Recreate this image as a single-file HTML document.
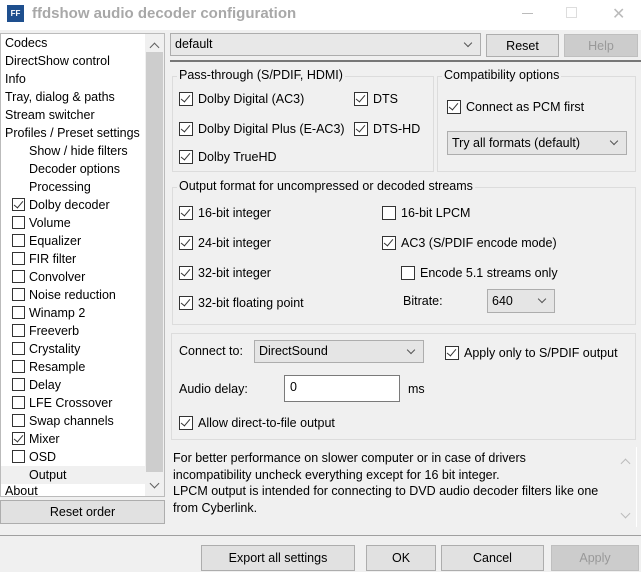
<html><head><style>
*{box-sizing:border-box}
body{margin:0;width:641px;height:572px;background:#f0f0f0;font-family:"Liberation Sans",sans-serif;font-size:12.5px;color:#000;position:relative;overflow:hidden}
.a{position:absolute;white-space:nowrap}
.cb{position:absolute;width:14px;height:14px;border:1px solid #333;background:#fff}
.cb.c::after{content:"";position:absolute;left:3px;top:0px;width:4px;height:8px;border:solid #333;border-width:0 1.3px 1.3px 0;transform:rotate(40deg)}
.btn{position:absolute;border:1px solid #adadad;background:#e1e1e1;text-align:center;line-height:22px}
.grp{position:absolute;border:1px solid #dcdcdc}
.lab{position:absolute;background:#f0f0f0;padding:0 2px;top:-9px;left:4px}
.combo{position:absolute;border:1px solid #adadad;background:#e5e5e5;padding-left:4px;line-height:20px}
.combo::after{content:"";position:absolute;right:9px;top:6px;width:5px;height:5px;border:solid #555;border-width:0 1px 1px 0;transform:rotate(45deg)}
.t{position:absolute;left:0;width:145px;height:18px;line-height:18px}
.chev{position:absolute;width:7px;height:7px;border:solid #606060;border-width:1.3px 0 0 1.3px}
</style></head><body>
<div class="a" style="left:0;top:0;width:641px;height:30px;background:#fff"></div>
<div class="a" style="left:7px;top:5px;width:17px;height:17px;background:#1e4f8e;color:#fff;font-size:8px;font-weight:bold;line-height:17px;text-align:center">FF</div>
<div class="a" style="left:32px;top:5px;font-size:15px;font-weight:bold;color:#a8a8a8">ffdshow audio decoder configuration</div>
<div class="a" style="left:522px;top:13px;width:11px;height:1px;background:#bbb"></div>
<div class="a" style="left:566px;top:7px;width:11px;height:11px;border:1px solid #ddd"></div>
<div class="a" style="left:612px;top:4px;font-size:16px;color:#bbb">✕</div>

<div class="a" style="left:0;top:33px;width:165px;height:464px;background:#fff;border:1px solid #bbb;overflow:hidden">
<div class="a" style="left:144px;top:0;width:19px;height:464px;background:#f0f0f0"></div>
<div class="a" style="left:145px;top:18px;width:17px;height:420px;background:#cdcdcd"></div>
<div class="chev" style="left:150px;top:10px;transform:rotate(45deg)"></div>
<div class="chev" style="left:150px;top:446px;transform:rotate(225deg)"></div>
<div class="t" style="top:432px;background:#f0f0f0"></div>
</div>
<div class="a" style="left:5px;top:34px;line-height:18px">Codecs<br>DirectShow control<br>Info<br>Tray, dialog &amp; paths<br>Stream switcher<br>Profiles / Preset settings</div>
<div class="a" style="left:29px;top:142px;line-height:18px">Show / hide filters<br>Decoder options<br>Processing</div>
<div class="a" style="left:29px;top:196px;line-height:18px">Dolby decoder<br>Volume<br>Equalizer<br>FIR filter<br>Convolver<br>Noise reduction<br>Winamp 2<br>Freeverb<br>Crystality<br>Resample<br>Delay<br>LFE Crossover<br>Swap channels<br>Mixer<br>OSD<br>Output</div>
<div class="a" style="left:5px;top:484px;line-height:14px;height:12px;overflow:hidden">About</div>
<div class="btn" style="left:0;top:500px;width:165px;height:24px">Reset order</div>

<div class="combo" style="left:170px;top:33px;width:311px;height:23px;background:#e8e8e8">default</div>
<div class="btn" style="left:486px;top:34px;width:73px;height:23px">Reset</div>
<div class="btn" style="left:564px;top:34px;width:74px;height:23px;color:#999;background:#ccc;border-color:#bfbfbf">Help</div>
<div class="a" style="left:170px;top:60px;width:471px;height:2px;background:#777"></div>

<div class="grp" style="left:172px;top:76px;width:262px;height:96px"><span class="lab" style="top:-9px">Pass-through (S/PDIF, HDMI)</span></div>
<div class="grp" style="left:437px;top:76px;width:199px;height:96px"><span class="lab">Compatibility options</span></div>
<div class="grp" style="left:172px;top:187px;width:464px;height:138px"><span class="lab">Output format for uncompressed or decoded streams</span></div>
<div class="grp" style="left:171px;top:333px;width:465px;height:107px"></div>

<div class="a" style="left:198px;top:92px">Dolby Digital (AC3)</div>
<div class="a" style="left:198px;top:122px">Dolby Digital Plus (E-AC3)</div>
<div class="a" style="left:198px;top:150px">Dolby TrueHD</div>
<div class="a" style="left:373px;top:92px">DTS</div>
<div class="a" style="left:371px;top:122px;background:#f0f0f0;padding-left:2px">DTS-HD</div>
<div class="a" style="left:466px;top:100px">Connect as PCM first</div>
<div class="combo" style="left:447px;top:131px;width:180px;height:24px;line-height:22px">Try all formats (default)</div>

<div class="a" style="left:198px;top:206px">16-bit integer</div>
<div class="a" style="left:198px;top:236px">24-bit integer</div>
<div class="a" style="left:198px;top:266px">32-bit integer</div>
<div class="a" style="left:198px;top:296px">32-bit floating point</div>
<div class="a" style="left:401px;top:206px">16-bit LPCM</div>
<div class="a" style="left:401px;top:236px">AC3 (S/PDIF encode mode)</div>
<div class="a" style="left:420px;top:266px">Encode 5.1 streams only</div>
<div class="a" style="left:403px;top:294px">Bitrate:</div>
<div class="combo" style="left:487px;top:289px;width:68px;height:24px;line-height:22px">640</div>

<div class="a" style="left:179px;top:344px">Connect to:</div>
<div class="combo" style="left:254px;top:340px;width:170px;height:23px">DirectSound</div>
<div class="a" style="left:464px;top:346px">Apply only to S/PDIF output</div>
<div class="a" style="left:179px;top:382px">Audio delay:</div>
<div class="a" style="left:284px;top:375px;width:116px;height:27px;background:#fff;border:1px solid #7a7a7a;padding:4px 5px">0</div>
<div class="a" style="left:408px;top:382px">ms</div>
<div class="a" style="left:198px;top:416px">Allow direct-to-file output</div>

<div class="a" style="left:171px;top:447px;width:466px;height:80px;background:#f0f0f0;border-right:1px solid #fff"></div>
<div class="a" style="left:173px;top:450px;line-height:16.5px">For better performance on slower computer or in case of drivers<br>incompatibility uncheck everything except for 16 bit integer.<br>LPCM output is intended for connecting to DVD audio decoder filters like one<br>from Cyberlink.</div>
<div class="chev" style="left:622px;top:460px;transform:rotate(45deg);border-color:#bbb"></div>
<div class="chev" style="left:622px;top:510px;transform:rotate(225deg);border-color:#bbb"></div>
<div class="a" style="left:0;top:535px;width:641px;height:1px;background:#a0a0a0"></div>
<div class="btn" style="left:201px;top:545px;width:154px;height:26px;line-height:24px">Export all settings</div>
<div class="btn" style="left:366px;top:545px;width:70px;height:26px;line-height:24px">OK</div>
<div class="btn" style="left:441px;top:545px;width:103px;height:26px;line-height:24px">Cancel</div>
<div class="btn" style="left:551px;top:545px;width:88px;height:26px;line-height:24px;color:#999;background:#ccc;border-color:#bfbfbf">Apply</div>

<div class="cb c" style="left:179px;top:92px"></div>
<div class="cb c" style="left:179px;top:122px"></div>
<div class="cb c" style="left:179px;top:150px"></div>
<div class="cb c" style="left:354px;top:92px"></div>
<div class="cb c" style="left:354px;top:122px"></div>
<div class="cb c" style="left:447px;top:100px"></div>
<div class="cb c" style="left:179px;top:206px"></div>
<div class="cb c" style="left:179px;top:236px"></div>
<div class="cb c" style="left:179px;top:266px"></div>
<div class="cb c" style="left:179px;top:296px"></div>
<div class="cb" style="left:382px;top:206px"></div>
<div class="cb c" style="left:382px;top:236px"></div>
<div class="cb" style="left:401px;top:266px"></div>
<div class="cb c" style="left:445px;top:346px"></div>
<div class="cb c" style="left:179px;top:416px"></div>
<div class="cb c" style="left:12px;top:198px;width:13px;height:13px"></div>
<div class="cb" style="left:12px;top:216px;width:13px;height:13px"></div>
<div class="cb" style="left:12px;top:234px;width:13px;height:13px"></div>
<div class="cb" style="left:12px;top:252px;width:13px;height:13px"></div>
<div class="cb" style="left:12px;top:270px;width:13px;height:13px"></div>
<div class="cb" style="left:12px;top:288px;width:13px;height:13px"></div>
<div class="cb" style="left:12px;top:306px;width:13px;height:13px"></div>
<div class="cb" style="left:12px;top:324px;width:13px;height:13px"></div>
<div class="cb" style="left:12px;top:342px;width:13px;height:13px"></div>
<div class="cb" style="left:12px;top:360px;width:13px;height:13px"></div>
<div class="cb" style="left:12px;top:378px;width:13px;height:13px"></div>
<div class="cb" style="left:12px;top:396px;width:13px;height:13px"></div>
<div class="cb" style="left:12px;top:414px;width:13px;height:13px"></div>
<div class="cb c" style="left:12px;top:432px;width:13px;height:13px"></div>
<div class="cb" style="left:12px;top:450px;width:13px;height:13px"></div>
</body></html>
